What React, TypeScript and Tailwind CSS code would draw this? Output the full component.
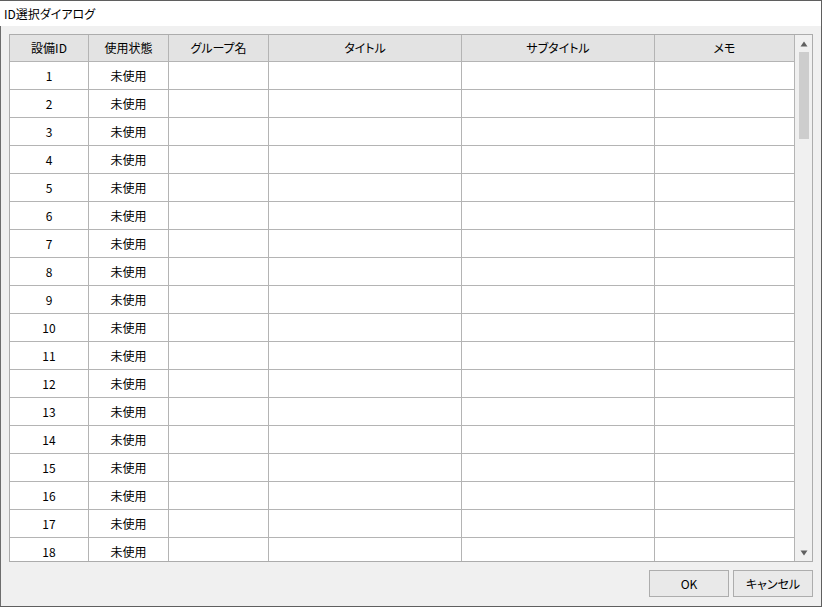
const columns = [
  { label: "設備ID", w: "w-[79px]" },
  { label: "使用状態", w: "w-[80px]" },
  { label: "グループ名", w: "w-[100px]" },
  { label: "タイトル", w: "w-[193px]" },
  { label: "サブタイトル", w: "w-[193px]" },
  { label: "メモ", w: "w-[140px]" },
]

const rows = Array.from({ length: 18 }, (_, i) => i + 1)

export default function App() {
  return (
    <div className="w-[822px] h-[607px] flex flex-col border-t border-r border-b border-[#5f5f5f] bg-[#f0f0f0] text-[12px] text-black overflow-hidden font-['Noto_Sans_CJK_JP','Noto_Sans',sans-serif] [font-feature-settings:'palt']">
      <div className="h-[25px] bg-white flex items-center pl-[4px] shrink-0">
        ID選択ダイアログ
      </div>
      <div className="flex-1 flex flex-col border-l border-[#6d6d6d] pl-[8px] pr-[8px] pt-[8px]">
        <div className="w-[804px] h-[528px] border border-[#acacac] bg-white flex overflow-hidden">
          <div className="w-[785px] flex flex-col">
            <div className="flex h-[27px] bg-[#e3e3e3] shrink-0">
              {columns.map((c) => (
                <div
                  key={c.label}
                  className={`${c.w} flex items-center justify-center border-r border-b border-[#b4b4b4] shrink-0`}
                >
                  {c.label}
                </div>
              ))}
            </div>
            {rows.map((n) => (
              <div key={n} className="flex h-[28px] shrink-0">
                {columns.map((c, i) => (
                  <div
                    key={c.label}
                    className={`${c.w} flex items-center justify-center border-r border-b border-[#b4b4b4] shrink-0`}
                  >
                    {i === 0 ? n : i === 1 ? "未使用" : ""}
                  </div>
                ))}
              </div>
            ))}
          </div>
          <div className="w-[17px] bg-[#f0f0f0] flex flex-col items-center shrink-0">
            <div className="h-[17px] flex items-center justify-center">
              <svg width="8" height="6" viewBox="0 0 8 6">
                <path d="M4 0.5 L7.5 5.5 L0.5 5.5 Z" fill="#606060" />
              </svg>
            </div>
            <div className="w-[10px] h-[87px] bg-[#cdcdcd]" />
            <div className="flex-1" />
            <div className="h-[17px] flex items-center justify-center">
              <svg width="8" height="6" viewBox="0 0 8 6">
                <path d="M0.5 0.5 L7.5 0.5 L4 5.5 Z" fill="#606060" />
              </svg>
            </div>
          </div>
        </div>
        <div className="flex justify-end gap-[4px] mt-[8px]">
          <button className="w-[80px] h-[27px] border border-[#adadad] bg-[#e9e9e9] flex items-center justify-center">
            OK
          </button>
          <button className="w-[80px] h-[27px] border border-[#adadad] bg-[#e9e9e9] flex items-center justify-center">
            キャンセル
          </button>
        </div>
      </div>
    </div>
  )
}
